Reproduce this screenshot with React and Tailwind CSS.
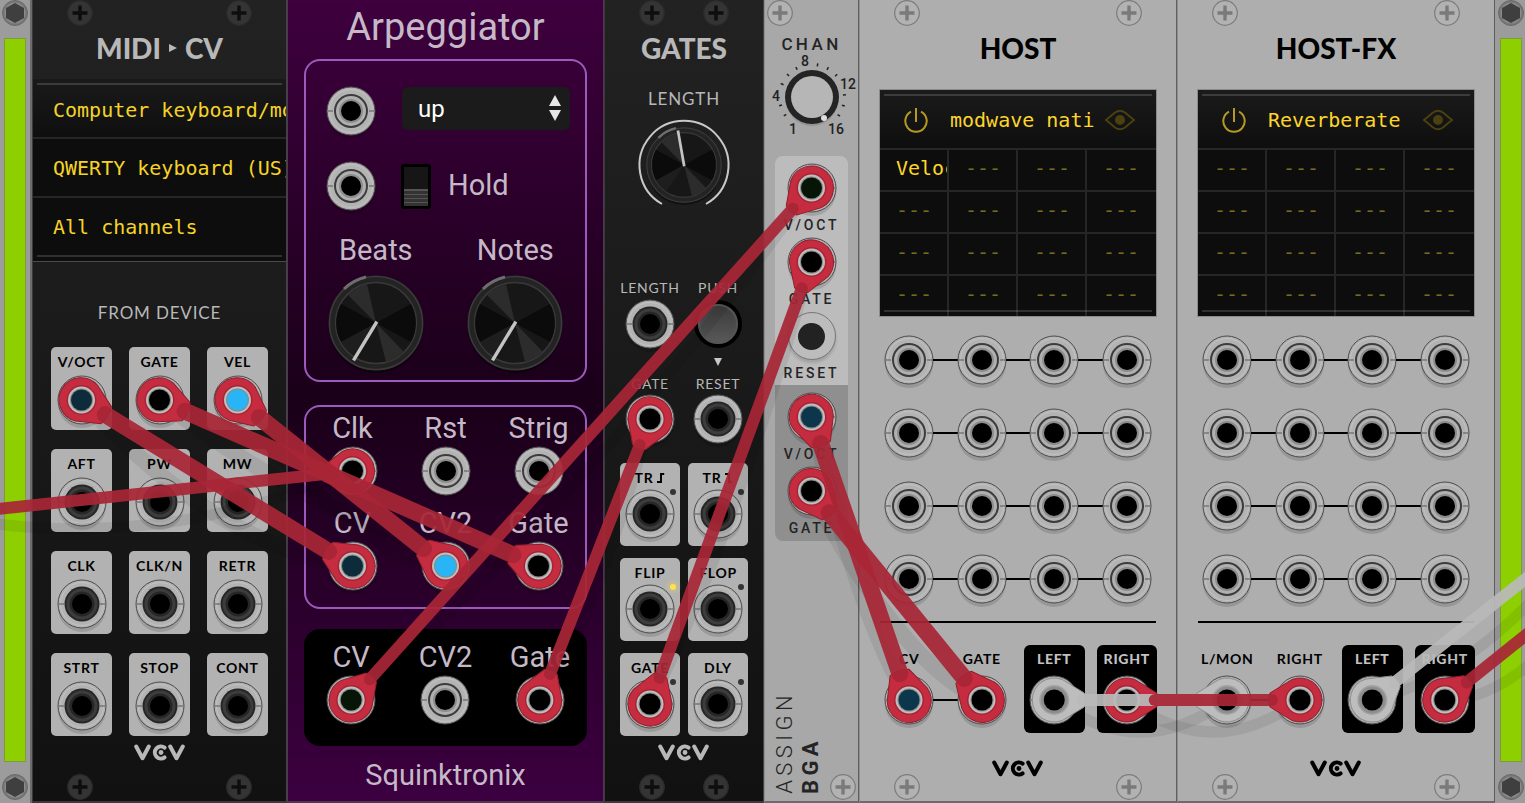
import { useLayoutEffect, useRef, useState } from "react";
import clsx from "clsx";

// hole: colour of the port light seen through the plug
const CABLES = [
  { from: "midi-voct", to: "arp-cv", poly: true, hole: "#0c2c3c" },
  { from: "midi-gate", to: "arp-gate", poly: true },
  { from: "midi-vel", to: "arp-cv2", poly: true, hole: "#29b4f6" },
  { from: "arp-clk", out: [-411, 44] },
  { from: "arp-out-cv", to: "bga-voct", hole: "#071507" },
  { from: "arp-out-gate", to: "gates-gate" },
  { from: "gates-out", to: "bga-gate" },
  { from: "bga-voct2", to: "host-cv", poly: true, hole: "#0b364c" },
  { from: "bga-gate2", to: "host-gate", poly: true },
  { from: "host-left", to: "fx-lmon", white: true },
  { from: "host-right", to: "fx-in-right" },
  { from: "fx-left", out: [228, -180], white: true },
  { from: "fx-right", out: [160, -128] },
];

function Plug({ x, y, angle, white, poly, hole = "#000" }) {
  return (
    <g transform={`translate(${x} ${y})`}>
      <path
        d={poly ? "M6 -21 A22 22 0 1 0 6 21 L29 10 Q33 0 29 -10 Z" : "M8 -20.5 A22 22 0 1 0 8 20.5 L30 7 Q33 0 30 -7 Z"}
        transform={`rotate(${angle})`}
        fill={white ? "#bdbdbd" : "#c62c3f"}
        stroke={white ? "#8d8d8d" : "#8e1f2d"}
        strokeWidth="1"
      />
      <circle r="15" fill={white ? "#a3a3a3" : "#a82434"} />
      <circle r="13.5" fill={white ? "#8e8e8e" : "#bfbfbf"} />
      <circle r="11.5" fill="#8a8a8a" />
      <circle r="10.5" fill={hole} />
    </g>
  );
}

function Cables() {
  const svg = useRef(null);
  const [lines, setLines] = useState([]);

  useLayoutEffect(() => {
    const root = svg.current.parentElement;
    const measure = () => {
      const base = root.getBoundingClientRect();
      const center = (id) => {
        const r = root.querySelector(`[data-jack="${id}"]`).getBoundingClientRect();
        return { x: r.left - base.left + r.width / 2, y: r.top - base.top + r.height / 2 };
      };
      setLines(
        CABLES.map((c) => {
          const a = center(c.from);
          const b = c.to ? center(c.to) : { x: a.x + c.out[0], y: a.y + c.out[1] };
          return { ...c, a, b, rad: Math.atan2(b.y - a.y, b.x - a.x) };
        })
      );
    };
    measure();
    const ro = new ResizeObserver(measure);
    ro.observe(root);
    return () => ro.disconnect();
  }, []);

  return (
    <svg ref={svg} className="pointer-events-none absolute inset-0 h-full w-full overflow-hidden" aria-hidden="true">
      {lines.map(({ a, b, poly }, i) => (
        <path
          key={i}
          d={`M${a.x} ${a.y} Q${(a.x + b.x) / 2} ${(a.y + b.y) / 2 + 64} ${b.x} ${b.y}`}
          fill="none"
          stroke="#000"
          strokeOpacity="0.07"
          strokeWidth={poly ? 16 : 11}
        />
      ))}
      {lines.map(({ a, b, rad, white, poly, hole, to }, i) => {
        const deg = (rad * 180) / Math.PI;
        return (
          <g key={i}>
            <Plug x={a.x} y={a.y} angle={deg} white={white} poly={poly} hole={hole} />
            {to && <Plug x={b.x} y={b.y} angle={deg + 180} white={white} poly={poly} hole={hole} />}
          </g>
        );
      })}
      {lines.map(({ a, b, rad, white, poly }, i) => {
        const dx = Math.cos(rad) * 28;
        const dy = Math.sin(rad) * 28;
        return (
          <line
            key={i}
            x1={a.x + dx}
            y1={a.y + dy}
            x2={b.x - dx}
            y2={b.y - dy}
            stroke={white ? "#b9b9b9" : "#a82636"}
            strokeOpacity="0.93"
            strokeWidth={poly ? 17 : 12}
            strokeLinecap="round"
          />
        );
      })}
    </svg>
  );
}

function Jack({ id, name, dark }) {
  return (
    <button type="button" aria-label={name} data-jack={id} className="block size-12 shrink-0">
      <svg viewBox="-24 -24 48 48" className="size-12 overflow-visible">
        <circle cy="4" r="24" fill="#000" opacity="0.13" />
        <circle r="24" fill="#b3b3b3" stroke="#4c4c4c" strokeWidth="1" />
        <circle r="21.5" fill="none" stroke="#cccccc" strokeWidth="1" opacity="0.6" />
        <path d="M-24 0h6M18 0h6" stroke="#777" strokeWidth="1.5" />
        {dark ? (
          <>
            <circle r="17.5" fill="#262626" />
            <circle r="14" fill="none" stroke="#3d3d3d" strokeWidth="3" />
          </>
        ) : (
          <>
            <circle r="17" fill="#3c3c3c" />
            <circle r="15" fill="#b0b0b0" />
            <circle r="12" fill="#8c8c8c" />
          </>
        )}
        <circle r="10" fill="#000" />
      </svg>
    </button>
  );
}

function Screw({ light }) {
  const c = light
    ? { fill: "#b2b2b2", stroke: "#7c7c7c", cross: "#7a7a7a" }
    : { fill: "#343434", stroke: "#2b2b2b", cross: "#0e0e0e" };
  return (
    <svg viewBox="0 0 26 26" className="size-[26px] shrink-0" aria-hidden="true">
      <circle cx="13" cy="13" r="12.3" fill={c.fill} stroke={c.stroke} strokeWidth="1.2" />
      <path d="M13 5.5v15M5.5 13h15" stroke={c.cross} strokeWidth="3.4" />
      <path d="M10 13L13 10L16 13L13 16Z" fill={c.cross} />
    </svg>
  );
}

function VcvLogo() {
  return (
    <svg viewBox="0 0 52 17" className="-mx-3 h-[17px] w-[52px] shrink-0" role="img" aria-label="VCV">
      <g fill="none" stroke="currentColor" strokeWidth="4" strokeLinecap="round" strokeLinejoin="round">
        <path d="M2.2 2.5L8.5 14.2L14.8 2.5" />
        <path d="M30.6 3.6A6.1 6.1 0 1 0 30.6 13.4" />
        <path d="M36.2 2.5L42.5 14.2L48.8 2.5" />
      </g>
      <circle cx="27" cy="8.5" r="2.4" fill="currentColor" />
    </svg>
  );
}

function Knob({ angle }) {
  return (
    <g>
      <circle cy="3" r="47" fill="#000" opacity="0.4" />
      <circle r="47.5" fill="#232323" />
      <circle r="46.5" fill="none" stroke="#3a3a3a" strokeWidth="1.5" />
      <path d="M-32 -34A47 47 0 0 1 -10 -46" fill="none" stroke="#6e6e6e" strokeWidth="3" />
      <circle r="40.5" fill="#171717" stroke="#393939" strokeWidth="1.5" />
      <path d="M0 0L-28 -28A40 40 0 0 1 -9 -39Z" fill="#2c2c2c" />
      <path d="M0 0L28 29A40 40 0 0 1 10 39Z" fill="#2c2c2c" />
      <path d="M0 0L-35 -19A40 40 0 0 0 -35 19Z" fill="#0b0b0b" />
      <path d="M0 0L35 -19A40 40 0 0 1 35 19Z" fill="#0b0b0b" />
      <path d="M0 0L-35 19A40 40 0 0 0 -22 33Z" fill="#1e1e1e" />
      <path d="M0 0V-42" stroke="#c4c4c4" strokeWidth="3.4" strokeLinecap="square" transform={`rotate(${angle})`} />
    </g>
  );
}

function Rail({ className }) {
  const hex = (
    <svg viewBox="-13 -13 26 26" className="size-[26px] shrink-0" aria-hidden="true">
      <circle r="12.5" fill="#777" stroke="#6a6a6a" />
      <circle r="10.5" fill="#8b8b8b" />
      <path d="M0 -10L9 -5V5L0 10L-9 5V-5Z" fill="#3f3f3f" />
    </svg>
  );
  return (
    <aside className={clsx("flex shrink-0 flex-col items-center bg-[#9c9c9c]", className)}>
      {hex}
      <div className="mt-[13px] w-5 flex-1 bg-[#8dcf00] ring-1 ring-[#7f9a3c]" />
      <div className="mt-[13px] mb-[3px]">{hex}</div>
    </aside>
  );
}

function Module({ title, light, low, className, children }) {
  return (
    <section
      className={clsx(
        "flex min-w-0 flex-col border-x border-b-2 font-['Lato',sans-serif]",
        light
          ? "border-r-[#5e5e5e] border-b-[#6b6b6b] border-l-[#8f8f8f] bg-[#aeaeae] text-black"
          : "border-r-[#444] border-b-[#3a3a3a] border-l-[#3a3a3a] bg-linear-to-b from-[#222] to-[#111] text-[#b8b8b8]",
        className
      )}
    >
      <div className="flex justify-between px-[34px]">
        <Screw light={light} />
        <Screw light={light} />
      </div>
      <h2 className="mt-1.5 text-center text-[28px] leading-8 font-black">{title}</h2>
      {children}
      <footer className={clsx("mt-auto flex justify-between px-[34px]", low ? "h-[41px]" : "h-[57px]")}>
        <div className="mb-px self-end"><Screw light={light} /></div>
        <VcvLogo />
        <div className="mb-px self-end"><Screw light={light} /></div>
      </footer>
    </section>
  );
}

function PortCard({ id, label, led, tight }) {
  return (
    <div className="relative flex h-[83px] flex-col items-center rounded-[5px] bg-[#b2b2b2] pt-[7px] text-black">
      <span className="flex items-center gap-1 text-[14px] leading-4 font-bold tracking-wider whitespace-nowrap">{label}</span>
      <div className={tight ? "mt-1" : "mt-1.5"}>
        <Jack id={id} name={typeof label === "string" ? label : "Trigger"} dark />
      </div>
      {led && (
        <span
          className={clsx(
            "absolute top-[26px] right-1 size-[6px] rounded-full",
            led === "on" ? "bg-[#ffe14a] shadow-[0_0_5px_2px_rgba(255,225,74,0.35)]" : "bg-[#333]"
          )}
        />
      )}
    </div>
  );
}

const MIDI_PORTS = [
  ["V/OCT", "midi-voct"], ["GATE", "midi-gate"], ["VEL", "midi-vel"],
  ["AFT"], ["PW"], ["MW"],
  ["CLK"], ["CLK/N"], ["RETR"],
  ["STRT"], ["STOP"], ["CONT"],
];

function MidiCv() {
  const row = "block w-full overflow-hidden pl-5 text-left whitespace-nowrap";
  return (
    <Module
      title={
        <span className="flex items-center justify-center gap-2">
          MIDI
          <svg viewBox="0 0 8 8" className="size-2" aria-hidden="true"><path d="M0 0L8 4L0 8Z" fill="currentColor" /></svg>
          CV
        </span>
      }
      className="flex-[255_1_255px]"
    >
      <div className="relative mt-[15px] border-b border-[#4a4a4a] bg-[#0d0d0d] font-['DejaVu_Sans_Mono',monospace] text-[20px] text-[#f5d327]">
        <button type="button" className={clsx(row, "h-[58px] bg-linear-to-b from-[#1a1a1a] to-[#0f0f0f] pt-1")}>Computer keyboard/mouse</button>
        <button type="button" className={clsx(row, "h-[59px] border-t-2 border-[#262626]")}>QWERTY keyboard (US)</button>
        <button type="button" className={clsx(row, "h-[65px] border-t-2 border-[#262626] pb-1.5")}>All channels</button>
        <div className="pointer-events-none absolute inset-x-1 inset-y-1 border-y-2 border-white/15" />
      </div>
      <h3 className="mt-[39px] text-center text-[17px] leading-6 tracking-wider">FROM DEVICE</h3>
      <div className="mt-[22px] grid grid-cols-3 gap-x-[17px] gap-y-[19px] px-[18px]">
        {MIDI_PORTS.map(([label, id]) => (
          <PortCard key={label} id={id} label={label} />
        ))}
      </div>
    </Module>
  );
}

function ArpPort({ id, label }) {
  return (
    <div className="flex flex-col items-center">
      <span className="mb-[3px] leading-8">{label}</span>
      <Jack id={id} name={label} />
    </div>
  );
}

function ArpKnob({ label }) {
  return (
    <label className="flex flex-col items-center">
      <span className="leading-8">{label}</span>
      <svg viewBox="-48 -48 96 96" className="mt-[9px] size-24 overflow-visible">
        <Knob angle={-149} />
      </svg>
      <input type="range" min="1" max="16" defaultValue="1" className="sr-only" />
    </label>
  );
}

function Arpeggiator() {
  return (
    <section className="flex min-w-0 flex-[317_1_317px] flex-col border-x border-b-2 border-[#4b3a4e] bg-linear-to-b from-[#3e003e] via-[#1a0019] to-[#3c0040] px-4 font-['Roboto',sans-serif] text-[29px] text-[#c5b9c8]">
      <h2 className="mt-[3px] mb-2 text-center text-[38px] leading-[48px]">Arpeggiator</h2>

      <div className="rounded-2xl border-2 border-[#9c5abc] pt-[26px] pb-[9px]">
        <div className="flex items-start pr-[15px] pl-[21px]">
          <Jack name="Mode CV" />
          <div className="relative ml-[27px] flex-1">
            <select aria-label="Mode" className="block h-[43px] w-full appearance-none rounded-md bg-[#1b1b1b] px-4 text-[24px] text-white">
              <option>up</option>
              <option>down</option>
            </select>
            <svg viewBox="0 0 12 26" className="pointer-events-none absolute top-2 right-[9px] h-[26px] w-3" aria-hidden="true">
              <path d="M6 0L12 11H0ZM0 15H12L6 26Z" fill="#e6e6e6" />
            </svg>
          </div>
        </div>
        <div className="mt-[27px] flex items-center pl-[21px]">
          <Jack name="Hold CV" />
          <label className="flex items-center gap-[17px]">
            <input
              type="checkbox"
              className="ml-[26px] h-[45px] w-[30px] appearance-none rounded-[3px] border-[3px] border-black bg-[linear-gradient(#161616_0_22px,#555_22px_24px,#333_24px_27px,#555_27px_28px,#333_28px_31px,#555_31px_32px,#333_32px_35px,#555_35px_36px,#333_36px)]"
            />
            Hold
          </label>
        </div>
        <div className="mt-6 grid grid-cols-2">
          <ArpKnob label="Beats" />
          <ArpKnob label="Notes" />
        </div>
      </div>

      <div className="mt-[23px] grid grid-cols-3 gap-y-3 rounded-2xl border-2 border-[#9c5abc] pt-[5px] pb-[17px]">
        <ArpPort id="arp-clk" label="Clk" />
        <ArpPort label="Rst" />
        <ArpPort label="Strig" />
        <ArpPort id="arp-cv" label="CV" />
        <ArpPort id="arp-cv2" label="CV2" />
        <ArpPort id="arp-gate" label="Gate" />
      </div>

      <div className="mt-5 grid grid-cols-3 rounded-2xl bg-black pt-3 pb-[22px]">
        <ArpPort id="arp-out-cv" label="CV" />
        <ArpPort label="CV2" />
        <ArpPort id="arp-out-gate" label="Gate" />
      </div>

      <p className="mt-[13px] text-center leading-8">Squinktronix</p>
    </section>
  );
}

const Rising = () => (
  <svg viewBox="0 0 10 12" className="h-2.5 w-2" aria-hidden="true"><path d="M0 11H5V1H9" fill="none" stroke="currentColor" strokeWidth="2.4" /></svg>
);
const Falling = () => (
  <svg viewBox="0 0 10 12" className="h-2.5 w-2" aria-hidden="true"><path d="M0 1H5V11H9" fill="none" stroke="currentColor" strokeWidth="2.4" /></svg>
);

function Gates() {
  const label = "text-[14px] leading-4 tracking-wider";
  return (
    <Module title="GATES" className="flex-[160_1_160px]">
      <label className="mt-[23px] flex flex-col items-center text-[17px] leading-6 tracking-wider">
        LENGTH
        <svg viewBox="-46 -46 92 92" className="mt-2 size-[92px] overflow-visible">
          <path d="M-22 39A44.5 44.5 0 1 1 22 39" fill="none" stroke="#c8c8c8" strokeWidth="2" />
          <g transform="scale(0.8)"><Knob angle={-10} /></g>
        </svg>
        <input type="range" className="sr-only" />
      </label>
      <div className="mt-[69px] grid grid-cols-2 justify-items-center gap-x-2 px-[15px]">
        <span className={label}>LENGTH</span>
        <span className={label}>PUSH</span>
        <div className="mt-1"><Jack name="Length" dark /></div>
        <button type="button" aria-label="Push" className="mt-2 size-10 rounded-full border-2 border-[#555] bg-linear-to-b from-[#3c3c3c] to-[#585858] ring-4 ring-black" />
        <span className="col-start-2 flex h-7 items-center">
          <svg viewBox="0 0 8 8" className="size-2" aria-hidden="true"><path d="M0 0H8L4 8Z" fill="#c8c8c8" /></svg>
        </span>
        <span className={clsx(label, "col-start-1")}>GATE</span>
        <span className={label}>RESET</span>
        <div className="mt-[3px]"><Jack id="gates-gate" name="Gate" dark /></div>
        <div className="mt-[3px]"><Jack name="Reset" dark /></div>
      </div>
      <div className="mt-5 grid grid-cols-2 gap-x-2 gap-y-3 px-[15px]">
        <PortCard tight led="off" label={<>TR <Rising /></>} />
        <PortCard tight led="off" label={<>TR <Falling /></>} />
        <PortCard tight led="on" label="FLIP" />
        <PortCard tight led="off" label="FLOP" />
        <PortCard tight led="off" label="GATE" id="gates-out" />
        <PortCard tight led="off" label="DLY" />
      </div>
    </Module>
  );
}

function ChannelKnob() {
  // sixteen steps, the numbered ones get a label in place of a tick
  const ticks = Array.from({ length: 16 }, (_, i) => i).filter((i) => ![0, 3, 7, 11, 15].includes(i));
  return (
    <label className="-mx-px block">
      <svg viewBox="0 0 94 84" className="mx-auto h-[84px] w-[94px]">
        <g transform="translate(47 43)">
          {ticks.map((i) => (
            <path key={i} d="M0 -31V-34" stroke="#222" strokeWidth="1.5" transform={`rotate(${-143 + i * 19.1})`} />
          ))}
          <circle cy="3" r="26" fill="#000" opacity="0.12" />
          <circle r="27" fill="#242424" />
          <circle r="21" fill="#b6b6b6" />
          <circle cx="12" cy="21" r="3" fill="#ddd" />
          <g className="text-[14px] font-medium" fill="#222" textAnchor="middle">
            <text x="-7" y="-31">8</text>
            <text x="36" y="-8">12</text>
            <text x="-36" y="4">4</text>
            <text x="-19" y="37">1</text>
            <text x="24" y="37">16</text>
          </g>
        </g>
      </svg>
      <input type="range" aria-label="Channels" min="1" max="16" defaultValue="16" className="sr-only" />
    </label>
  );
}

function AssignPort({ id, label }) {
  return (
    <div className="mb-[5px] flex flex-col items-center gap-[5px]">
      <Jack id={id} name={label} />
      <span className="text-[14px] leading-4 font-medium tracking-[0.2em]">{label}</span>
    </div>
  );
}

function Assign() {
  return (
    <section className="flex min-w-0 flex-[95_1_95px] flex-col border-x border-b-2 border-r-[#5e5e5e] border-b-[#6b6b6b] border-l-[#8f8f8f] bg-[#a8a8a8] font-['Roboto',sans-serif] text-[#242424]">
      <div className="pl-0.5"><Screw light /></div>
      <h2 className="mt-2 text-center text-[17px] leading-5 font-medium tracking-[0.2em]">CHAN</h2>
      <ChannelKnob />
      <div className="mx-[10px] mt-[18px] rounded-t-lg bg-[#bcbcbc] pt-2">
        <AssignPort id="bga-voct" label="V/OCT" />
        <AssignPort id="bga-gate" label="GATE" />
        <div className="flex flex-col items-center gap-[5px] pb-1">
          <button type="button" aria-label="Reset" className="flex size-12 items-center justify-center rounded-full border border-[#777] bg-[#bcbcbc] shadow-[0_3px_3px_rgba(0,0,0,0.15)]">
            <span className="size-[27px] rounded-full bg-[#222]" />
          </button>
          <span className="text-[14px] leading-4 font-medium tracking-[0.2em]">RESET</span>
        </div>
      </div>
      <div className="mx-[10px] rounded-b-lg bg-[#8f8f8f] pt-2">
        <AssignPort id="bga-voct2" label="V/OCT" />
        <AssignPort id="bga-gate2" label="GATE" />
      </div>
      <footer className="mt-auto flex items-end pb-px pl-1.5">
        <span className="mb-1.5 rotate-180 text-[22px] leading-7 font-light tracking-[0.2em] [writing-mode:vertical-rl]">ASSIGN</span>
        <span className="mb-1.5 rotate-180 text-[22px] leading-6 font-bold tracking-[0.2em] [writing-mode:vertical-rl]">BGA</span>
        <div className="mr-0.5 ml-auto"><Screw light /></div>
      </footer>
    </section>
  );
}

function PluginScreen({ name, params }) {
  return (
    <div className="relative mx-5 mt-[26px] overflow-hidden bg-[#0d0d0d] font-['DejaVu_Sans_Mono',monospace] text-[20px] text-[#fdd52a] ring-1 ring-[#8a8a8a]">
      <div className="flex h-[58px] items-center bg-linear-to-b from-[#1b1b1b] to-[#0e0e0e] pr-5 pl-6 pt-0.5">
        <button type="button" aria-label="Bypass">
          <svg viewBox="0 0 24 26" className="h-[26px] w-6" fill="none" stroke="#b39a22" strokeWidth="2">
            <path d="M7 4.6A10.7 10.7 0 1 0 17 4.6M12 1V15" />
          </svg>
        </button>
        <button type="button" className="ml-[22px] min-w-0 flex-1 overflow-hidden text-left leading-6 whitespace-nowrap">{name}</button>
        <button type="button" aria-label="Show editor" className="ml-2">
          <svg viewBox="0 0 32 22" className="h-[22px] w-8" fill="none" stroke="#4a4010" strokeWidth="2">
            <path d="M2 11Q7 7 11 3.5Q16 0 21 3.5Q25 7 30 11Q25 15 21 18.5Q16 22 11 18.5Q7 15 2 11Z" />
            <circle cx="16" cy="11" r="4" fill="#4a4010" />
          </svg>
        </button>
      </div>
      <div className="grid grid-cols-4">
        {params.map((p, i) => (
          <button
            key={i}
            type="button"
            className={clsx(
              "h-[42px] overflow-hidden border-t-2 border-[#262626] pb-1 pl-4 text-left whitespace-nowrap",
              i % 4 !== 3 && "border-r-2",
              p ? "text-[#fdd52a]" : "text-[#746a20]"
            )}
          >
            {p || "---"}
          </button>
        ))}
      </div>
      <div className="pointer-events-none absolute inset-1 border-y-2 border-white/15" />
    </div>
  );
}

function HostPort({ id, label }) {
  return (
    <div className="mx-1.5 flex flex-col items-center rounded-md bg-black pt-1.5 pb-[9px] text-[#c2c2c2]">
      <span className="mb-[9px] text-[14px] leading-4 font-black tracking-wider">{label}</span>
      <Jack id={id} name={label} />
    </div>
  );
}

function Host({ title, plugin, params, inputs, outputs }) {
  const wire = <div className="h-[2px] flex-1 bg-black" />;
  return (
    <Module title={title} light low className="flex-[318_1_318px]">
      <PluginScreen name={plugin} params={params} />
      <div className="mt-5 flex flex-col gap-[25px] px-[25px]">
        {[0, 1, 2, 3].map((r) => (
          <div key={r} className="flex items-center">
            <Jack name={`Parameter ${r * 4 + 1}`} />
            {wire}
            <Jack name={`Parameter ${r * 4 + 2}`} />
            {wire}
            <Jack name={`Parameter ${r * 4 + 3}`} />
            {wire}
            <Jack name={`Parameter ${r * 4 + 4}`} />
          </div>
        ))}
      </div>
      <div className="mx-5 mt-[18px] h-[2px] bg-black" />
      <div className="mt-[22px] grid grid-cols-4 px-[13px]">
        <div className="col-span-2 pt-1.5">
          <div className="mb-[9px] grid grid-cols-2 text-center text-[14px] leading-4 font-bold tracking-wider">
            {inputs.map(([label]) => <span key={label}>{label}</span>)}
          </div>
          <div className="flex items-center px-3">
            <Jack id={inputs[0][1]} name={inputs[0][0]} />
            {wire}
            <Jack id={inputs[1][1]} name={inputs[1][0]} />
          </div>
        </div>
        <HostPort id={outputs[0]} label="LEFT" />
        <HostPort id={outputs[1]} label="RIGHT" />
      </div>
    </Module>
  );
}

export default function App() {
  const empty = Array(16).fill("");
  return (
    <main className="overflow-x-auto bg-[#2a2a2a]">
      <div className="relative flex min-h-screen min-w-[1400px]">
        <Rail className="w-8 border-r-2 border-[#6c6c6c]" />
        <MidiCv />
        <Arpeggiator />
        <Gates />
        <Assign />
        <Host
          title="HOST"
          plugin="modwave nati"
          params={["Veloc", ...empty.slice(1)]}
          inputs={[["CV", "host-cv"], ["GATE", "host-gate"]]}
          outputs={["host-left", "host-right"]}
        />
        <Host
          title="HOST-FX"
          plugin="Reverberate"
          params={empty}
          inputs={[["L/MON", "fx-lmon"], ["RIGHT", "fx-in-right"]]}
          outputs={["fx-left", "fx-right"]}
        />
        <Rail className="w-[30px] pl-0.5" />
        <Cables />
      </div>
    </main>
  );
}
